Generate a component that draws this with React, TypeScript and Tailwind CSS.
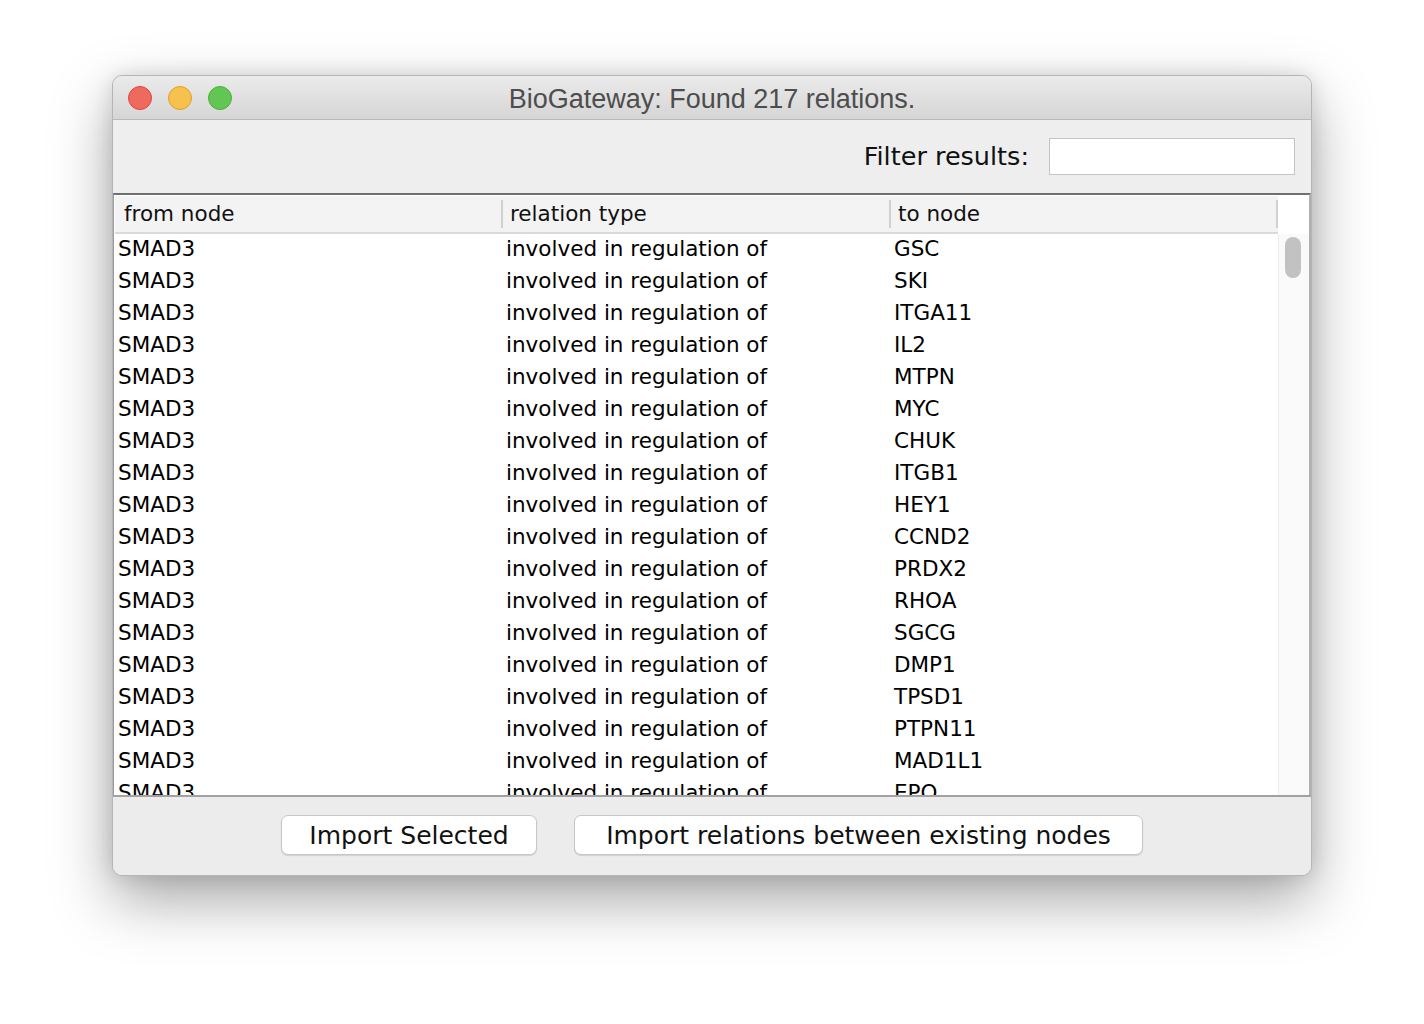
import React from "react";

const targets = [
  "GSC","SKI","ITGA11","IL2","MTPN","MYC","CHUK","ITGB1","HEY1","CCND2","PRDX2","RHOA","SGCG","DMP1","TPSD1","PTPN11","MAD1L1","EPO","TGFB1","SMAD7",
];

const lucida = { fontFamily: '"DejaVu Sans", "Noto Sans", sans-serif' };

export default function App() {
  return (
    <div className="min-h-[1024px] w-[1424px] bg-white pt-[75px] pl-[112px]">
      <div
        className="flex h-[801px] w-[1200px] flex-col overflow-hidden rounded-[10px] border border-[#b5b5b5] bg-[#ececec] shadow-[0_24px_60px_rgba(0,0,0,0.35),0_0_20px_rgba(0,0,0,0.12)]"
      >
        {/* Title bar */}
        <div className="relative flex h-[44px] shrink-0 items-center justify-center border-b border-[#b9b9b9] bg-gradient-to-b from-[#ebebeb] to-[#d5d5d5] pt-[3px]">
          <div className="absolute left-[15px] top-[10px] flex gap-[16px]">
            <span className="h-[24px] w-[24px] rounded-full border border-[#e0443e] bg-[#ee6a5f]" />
            <span className="h-[24px] w-[24px] rounded-full border border-[#dea123] bg-[#f6c14f]" />
            <span className="h-[24px] w-[24px] rounded-full border border-[#4fae3b] bg-[#62c655]" />
          </div>
          <span
            className="text-[27px] text-[#4d4d4d]"
            style={{ fontFamily: '"Liberation Sans", Arial, sans-serif' }}
          >
            BioGateway: Found 217 relations.
          </span>
        </div>

        {/* Filter row */}
        <div className="flex h-[73px] shrink-0 items-center justify-end gap-[20px] bg-[#eeeeee] pr-[16px]">
          <span className="text-[25.5px] text-[#111]" style={lucida}>
            Filter results:
          </span>
          <div className="h-[37px] w-[246px] border border-[#c3c3c3] bg-white" />
        </div>

        {/* Table */}
        <div className="flex h-[602px] shrink-0 flex-col border-t-2 border-l border-r-2 border-t-[#6f6f6f] border-l-[#9a9a9a] border-r-[#b0b0b0] bg-white">
          <div className="flex min-h-0 flex-1">
            <div className="flex min-w-0 flex-1 flex-col pl-[1px] pt-[1px]" style={lucida}>
              {/* Header */}
              <div className="flex h-[38px] shrink-0 items-center border-b-2 border-[#dadada] bg-[#f3f3f3] text-[21.5px] text-[#111]">
                <div className="flex h-full w-[388px] items-center justify-between">
                  <span className="pl-[9px]">from node</span>
                  <span className="h-[28px] w-[2px] bg-[#d0d0d0]" />
                </div>
                <div className="flex h-full w-[388px] items-center justify-between">
                  <span className="pl-[7px]">relation type</span>
                  <span className="h-[28px] w-[2px] bg-[#d0d0d0]" />
                </div>
                <div className="flex h-full flex-1 items-center justify-between">
                  <span className="pl-[7px]">to node</span>
                  <span className="h-[28px] w-[2px] bg-[#d0d0d0]" />
                </div>
              </div>
              {/* Body */}
              <div className="min-h-0 flex-1 overflow-hidden text-[21.5px] text-black">
                {targets.map((t, i) => (
                  <div key={i} className="flex h-[32px] items-center pb-[2px]">
                    <span className="w-[388px] pl-[3px]">SMAD3</span>
                    <span className="w-[388px] pl-[3px]">involved in regulation of</span>
                    <span className="flex-1 pl-[3px]">{t}</span>
                  </div>
                ))}
              </div>
            </div>
            {/* Scrollbar */}
            <div className="flex w-[31px] shrink-0 flex-col bg-white">
              <div className="h-[39px] shrink-0" />
              <div className="flex-1 border-l border-[#ececec] bg-[#fafafa] pl-[6px] pt-[3px]">
                <div className="h-[41px] w-[16px] rounded-full bg-[#c2c2c2]" />
              </div>
            </div>
          </div>
        </div>

        {/* Bottom */}
        <div className="flex flex-1 items-start justify-center gap-[37px] border-t-2 border-[#a2a2a2] bg-[#ececec] pt-[18px]">
          <button
            className="h-[40px] w-[256px] rounded-[7px] border border-[#c6c6c6] bg-white pt-[1px] text-[25px] text-[#111] shadow-[0_1px_1px_rgba(0,0,0,0.12)]"
            style={lucida}
          >
            Import Selected
          </button>
          <button
            className="h-[40px] w-[569px] rounded-[7px] border border-[#c6c6c6] bg-white pt-[1px] text-[25px] text-[#111] shadow-[0_1px_1px_rgba(0,0,0,0.12)]"
            style={lucida}
          >
            Import relations between existing nodes
          </button>
        </div>
      </div>
    </div>
  );
}
